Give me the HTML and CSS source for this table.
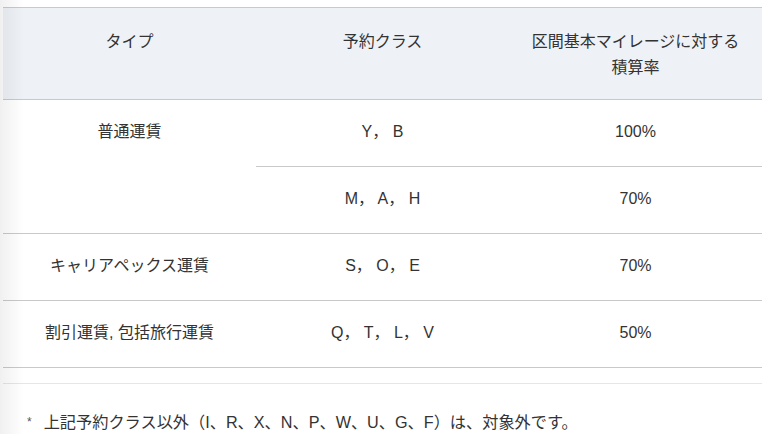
FILE: index.html
```html
<!DOCTYPE html>
<html lang="ja">
<head>
<meta charset="utf-8">
<link rel="stylesheet" href="styles.css">
</head>
<body>
<div class="page">
  <div class="scroll">
    <table class="rates">
      <colgroup>
        <col class="col">
        <col class="col">
        <col class="col">
      </colgroup>
      <thead>
        <tr>
          <th>タイプ</th>
          <th>予約クラス</th>
          <th>区間基本マイレージに対する<br>積算率</th>
        </tr>
      </thead>
      <tbody>
        <tr>
          <td rowspan="2">普通運賃</td>
          <td>Y， B</td>
          <td>100%</td>
        </tr>
        <tr>
          <td>M， A， H</td>
          <td>70%</td>
        </tr>
        <tr>
          <td>キャリアペックス運賃</td>
          <td>S， O， E</td>
          <td>70%</td>
        </tr>
        <tr>
          <td>割引運賃, 包括旅行運賃</td>
          <td>Q， T， L， V</td>
          <td>50%</td>
        </tr>
      </tbody>
    </table>
  </div>
  <div class="note">
    <span class="mark">*</span>
    <span class="note-text">上記予約クラス以外（I、R、X、N、P、W、U、G、F）は、対象外です。</span>
  </div>
</div>
</body>
</html>
```
FILE: styles.css
```css
html, body {
  margin: 0;
  padding: 0;
  background: #ffffff;
}

body {
  font-family: "Liberation Sans", "Noto Sans CJK JP", sans-serif;
  color: #333333;
  font-size: 16px;
}

.page {
  position: relative;
  padding: 7px 6px 0 3px;
  width: 759px;
}

.page::before {
  content: "";
  position: absolute;
  left: 0;
  top: 0;
  width: 24px;
  height: 440px;
  background: linear-gradient(to right, rgba(0, 0, 0, 0.06), rgba(0, 0, 0, 0));
  pointer-events: none;
}

.rates {
  width: 759px;
  border-collapse: collapse;
  table-layout: fixed;
  border-top: 1px solid #c9c9c9;
}

.col {
  width: 253px;
}

.rates th {
  box-sizing: border-box;
  background: #eef2f7;
  font-weight: normal;
  line-height: 26px;
  padding: 21px 4px 18px;
  vertical-align: top;
  text-align: center;
  border-bottom: 1px solid #c9c9c9;
  white-space: nowrap;
}

.rates td {
  box-sizing: border-box;
  line-height: 24px;
  padding: 20px 4px 22px;
  text-align: center;
  vertical-align: top;
  border-bottom: 1px solid #c9c9c9;
}

.note {
  margin-top: 15px;
  border-top: 1px solid #e6e6e6;
  padding: 26px 0 0 24px;
  display: flex;
  align-items: center;
  gap: 12px;
  line-height: 24px;
  width: 735px;
  font-size: 16.2px;
}

.mark {
  font-size: 12px;
  color: #555555;
}
```
